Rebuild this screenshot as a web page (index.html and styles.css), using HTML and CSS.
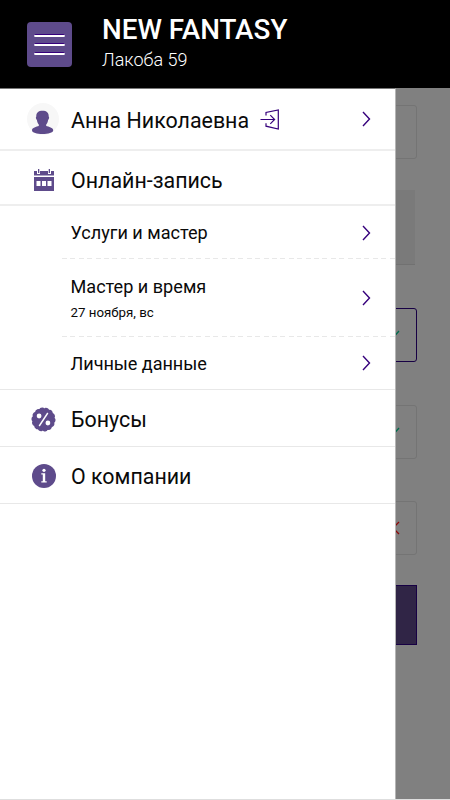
FILE: index.html
```html
<!DOCTYPE html>
<html lang="ru">
<head>
<meta charset="utf-8">
<title>NEW FANTASY</title>
<link rel="stylesheet" href="styles.css">
</head>
<body>
<header class="header">
  <button class="burger" aria-label="Меню"><span></span><span></span><span></span></button>
  <div class="brand">
    <h1 class="brand-name">NEW FANTASY</h1>
    <p class="brand-address">Лакоба 59</p>
  </div>
</header>
<div class="stage">
  <main class="form">
    <div class="field"></div>
    <div class="note"></div>
    <div class="field field-active"><svg class="mark ok" viewBox="0 0 14 14"><path d="M1 8l4 4 8-9"/></svg></div>
    <div class="field"><svg class="mark ok" viewBox="0 0 14 14"><path d="M1 8l4 4 8-9"/></svg></div>
    <div class="field"><svg class="mark bad" viewBox="0 0 14 14"><path d="M1 1l12 12M13 1L1 13"/></svg></div>
    <div class="submit"></div>
  </main>
  <nav class="drawer">
    <a class="item user">
      <span class="avatar"><svg width="31" height="31" viewBox="0 0 31 31"><path d="M15.500 7.800c-4 0-6.400 2-6.200 5.600-.9.6-.2 3 .6 3.500.3 2.300 1 3.700 1.900 4.700v1.400C9.500 23.700 5 24.600 5 27.300 5 29.800 10 31 15.500 31s10.700-1.200 10.700-3.700c0-2.700-4.600-3.600-7-4.300v-1.400c.9-1 1.600-2.400 1.900-4.700.8-.5 1.500-2.900.6-3.500.2-3.600-2.200-5.600-6.200-5.600z"/></svg></span>
      <span class="label">Анна Николаевна</span>
      <svg class="exit" width="20" height="21" viewBox="0 0 20 21"><path d="M6 6.500V3.500L18.300 1v19L6 17.200v-3M.5 10.500h14M10.300 6.200l4.300 4.300-4.300 4.300"/></svg>
      <svg class="chevron" viewBox="0 0 9 16"><path d="M1 1l6.500 7L1 15"/></svg>
    </a>
    <a class="item booking">
      <span class="icon"><svg width="20" height="22" viewBox="0 0 20 22"><path d="M0 2h3v3h3V2h8v3h3V2h3v4.500H0zM4 0h1.300v4H4zM14.700 0H16v4h-1.300zM0 8h20v14H0z"/><path class="cut" d="M2.500 12h4v5h-4zM8 12h4v5H8zM13.500 12h4v5h-4z"/></svg></span>
      <span class="label">Онлайн-запись</span>
    </a>
    <div class="steps">
      <a class="step"><span class="step-name">Услуги и мастер</span><svg class="chevron" viewBox="0 0 9 16"><path d="M1 1l6.500 7L1 15"/></svg></a>
      <a class="step step-tall"><span class="step-text"><span class="step-name">Мастер и время</span><span class="step-date">27 ноября, вс</span></span><svg class="chevron" viewBox="0 0 9 16"><path d="M1 1l6.500 7L1 15"/></svg></a>
      <a class="step step-last"><span class="step-name">Личные данные</span><svg class="chevron" viewBox="0 0 9 16"><path d="M1 1l6.500 7L1 15"/></svg></a>
    </div>
    <a class="item bonus">
      <span class="icon"><svg width="25" height="25" viewBox="-12.500 -12.500 25 25"><circle r="11.300"/><circle class="scallop" r="10.500" pathLength="140"/><circle class="cut" cx="-4.400" cy="-3.500" r="2.400"/><circle class="cut" cx="4.400" cy="3.500" r="2.400"/><path class="slash" d="M4.300-6.500L-4.300 6.500"/></svg></span>
      <span class="label">Бонусы</span>
    </a>
    <a class="item about">
      <span class="icon"><svg width="24" height="24" viewBox="0 0 24 24"><circle cx="12" cy="12" r="12"/><circle class="cut" cx="12" cy="6.300" r="1.600"/><path class="cut" d="M9.300 9.200h3.900v8.100h1.500v1.200H9.300v-1.200h1.500v-6.900H9.300z"/></svg></span>
      <span class="label">О компании</span>
    </a>
  </nav>
</div>
</body>
</html>
```
FILE: styles.css
```css
* { box-sizing: border-box; }
body {
  margin: 0;
  width: 450px;
  height: 800px;
  overflow: hidden;
  font-family: Roboto, "Liberation Sans", sans-serif;
  color: #0a0a0a;
  background: #dedede;
}
h1, p { margin: 0; }
svg { display: block; flex: none; }

.header {
  display: flex;
  align-items: center;
  height: 88px;
  padding-left: 27px;
  background: #000;
  color: #fff;
}
.burger {
  display: flex;
  flex-direction: column;
  align-items: center;
  justify-content: center;
  gap: 6px;
  width: 45px;
  height: 45px;
  padding: 0;
  border: 0;
  border-radius: 4px;
  background: #5e4b8b;
}
.burger span {
  width: 31px;
  height: 3px;
  border-radius: 2px;
  background: #fff;
  border-top: 1px solid #36007c;
}
.brand { margin: 0 0 2px 30px; }
.brand-name {
  font-size: 27.8px;
  font-weight: 500;
  line-height: 34px;
  white-space: nowrap;
}
.brand-address {
  font-size: 18px;
  font-weight: 300;
  line-height: 26px;
}

.stage { position: relative; height: 711px; background: #808080; }
.form {
  display: flex;
  flex-direction: column;
  width: 417px;
  padding-top: 17px;
}
.field {
  display: flex;
  align-items: center;
  justify-content: flex-end;
  height: 54px;
  margin-bottom: 42.5px;
  padding-right: 16px;
  border: 1px solid #747474;
  border-radius: 3px;
}
.field:first-child { margin-bottom: 31px; }
.field-active { border-color: #170044; }
.note {
  height: 75px;
  margin: 0 2px 43px 0;
  background: #7a7a7a;
  border-bottom: 1px solid #717171;
}
.mark { width: 14px; height: 14px; fill: none; stroke-width: 1.3; }
.ok { stroke: #006b4c; }
.bad { stroke: #8c0808; }
.submit {
  height: 60px;
  margin-top: -12.5px;
  border: 1px solid #170044;
  background: #302546;
}

.drawer {
  position: absolute;
  top: 0;
  left: 0;
  width: 396px;
  height: 100%;
  background: #fff;
  border-top: 1px solid #777;
  border-right: 1px solid #b5b5b5;
  fill: #5e4b8b;
}
.item {
  display: flex;
  align-items: center;
  padding: 0 24px 0 27px;
  border-bottom: 2px solid #eee;
}
.user { height: 62px; }
.user .label { padding-top: 3px; }
.booking { height: 55px; padding-top: 4px; }
.booking .label { padding-top: 3px; }
.bonus, .about {
  height: 57px;
  padding-top: 2px;
  border-bottom-width: 1px;
  border-color: #e8e8e8;
}
.bonus .label, .about .label { padding-top: 2px; }
.label { font-size: 21.4px; line-height: 28px; white-space: nowrap; }
.avatar {
  width: 32px;
  height: 32px;
  border-radius: 50%;
  background: #f7f7f7;
}
.icon { display: flex; justify-content: center; width: 33px; }
.avatar + .label { margin-left: 12px; }
.icon + .label { margin-left: 11px; }
.exit { margin-left: 11px; fill: none; stroke: #36007c; stroke-width: 1.2; }
.chevron {
  width: 9px;
  height: 16px;
  margin-left: auto;
  fill: none;
  stroke: #36007c;
  stroke-width: 1.4;
}
.cut { fill: #fff; }
.scallop {
  fill: none;
  stroke: #5e4b8b;
  stroke-width: 3;
  stroke-linecap: round;
  stroke-dasharray: 3 7;
}
.slash { stroke: #fff; stroke-width: 1.4; }

.steps { border-bottom: 1px solid #e8e8e8; }
.step {
  display: flex;
  align-items: center;
  height: 53px;
  margin-left: 62px;
  padding: 0 24px 0 8.5px;
  background: repeating-linear-gradient(90deg, #e8e8e8 0 5px, transparent 5px 8.4px) left bottom / 100% 1px no-repeat;
}
.step-tall { height: 78px; padding-bottom: 1px; }
.step-last { height: 52px; background: none; }
.step-text { display: flex; flex-direction: column; padding-top: 3px; }
.step-name { font-size: 18.1px; line-height: 28px; white-space: nowrap; }
.step-last .step-name { letter-spacing: -0.05px; padding-top: 1px; }
.step-date { font-size: 13.3px; line-height: 24px; }
```
